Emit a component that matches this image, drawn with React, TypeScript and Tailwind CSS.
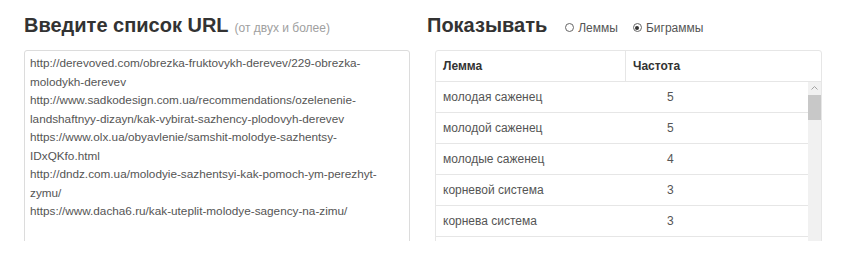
import React from 'react';

const urls = [
  'http://derevoved.com/obrezka-fruktovykh-derevev/229-obrezka-molodykh-derevev',
  'http://www.sadkodesign.com.ua/recommendations/ozelenenie-landshaftnyy-dizayn/kak-vybirat-sazhency-plodovyh-derevev',
  'https://www.olx.ua/obyavlenie/samshit-molodye-sazhentsy-IDxQKfo.html',
  'http://dndz.com.ua/molodyie-sazhentsyi-kak-pomoch-ym-perezhyt-zymu/',
  'https://www.dacha6.ru/kak-uteplit-molodye-sagency-na-zimu/',
].join('\n');

const rows = [
  { lemma: 'молодая саженец', count: 5 },
  { lemma: 'молодой саженец', count: 5 },
  { lemma: 'молодые саженец', count: 4 },
  { lemma: 'корневой система', count: 3 },
  { lemma: 'корнева система', count: 3 },
];

function Radio({ label, checked }: { label: string; checked?: boolean }) {
  return (
    <label className="flex items-center gap-[4px] text-[12px] text-[#555]">
      <span className="flex h-[9px] w-[9px] items-center justify-center rounded-full border border-[#666] bg-white">
        {checked && <span className="h-[4px] w-[4px] rounded-full bg-[#333]" />}
      </span>
      {label}
    </label>
  );
}

export default function App() {
  return (
    <div
      className="h-[279px] w-[845px] bg-white"
      style={{ fontFamily: '"Liberation Sans", Arial, sans-serif' }}
    >
      {/* page is cut off at the bottom of the visible area */}
      <div className="flex h-[241px] overflow-hidden pt-[14px]">
        {/* URL input */}
        <div className="ml-[24px] w-[386px] shrink-0">
          <div className="flex items-baseline gap-[6px]">
            <h2 className="text-[20px] font-bold leading-[22px] text-[#333]">Введите список URL</h2>
            <span className="text-[12px] text-[#a0a0a0]">(от двух и более)</span>
          </div>
          <textarea
            readOnly
            value={urls}
            className="mt-[13px] block h-[230px] w-full resize-none overflow-hidden rounded-[3px] border border-[#dcdcdc] px-[5px] pt-[3px] text-[11.75px] leading-[18.5px] text-[#555] outline-none"
          />
        </div>

        {/* results */}
        <div className="ml-[17px] w-[395px] shrink-0">
          <div className="flex items-baseline gap-[18px]">
            <h2 className="text-[20px] font-bold leading-[22px] text-[#333]">Показывать</h2>
            <div className="flex items-center gap-[15px]">
              <Radio label="Леммы" />
              <Radio label="Биграммы" checked />
            </div>
          </div>

          <div className="ml-[8px] mt-[13px] flex h-[220px] w-[387px] flex-col overflow-hidden rounded-[3px] border border-[#e6e6e6] text-[12px]">
            <div className="flex h-[31px] shrink-0 border-b border-[#e6e6e6] font-bold text-[#333]">
              <div className="w-[190px] border-r border-[#e6e6e6] pl-[7px] leading-[30px]">Лемма</div>
              <div className="pl-[7px] leading-[30px]">Частота</div>
            </div>
            <div className="flex flex-1">
              <div className="flex-1">
                {rows.map((r) => (
                  <div key={r.lemma} className="flex h-[31px] border-b border-[#e6e6e6] text-[#555]">
                    <div className="w-[224px] pl-[7px] leading-[30px]">{r.lemma}</div>
                    <div className="pl-[7px] leading-[30px]">{r.count}</div>
                  </div>
                ))}
              </div>
              <div className="flex w-[13px] flex-col items-center bg-[#f1f1f1]">
                <div className="flex h-[13px] w-full items-center justify-center">
                  <svg width="7" height="4" viewBox="0 0 7 4">
                    <path d="M0.5 3.5 L3.5 0.5 L6.5 3.5" fill="none" stroke="#a3a3a3" strokeWidth="1" />
                  </svg>
                </div>
                <div className="h-[25px] w-full bg-[#c8c8c8]" />
              </div>
            </div>
          </div>
        </div>
      </div>
    </div>
  );
}
